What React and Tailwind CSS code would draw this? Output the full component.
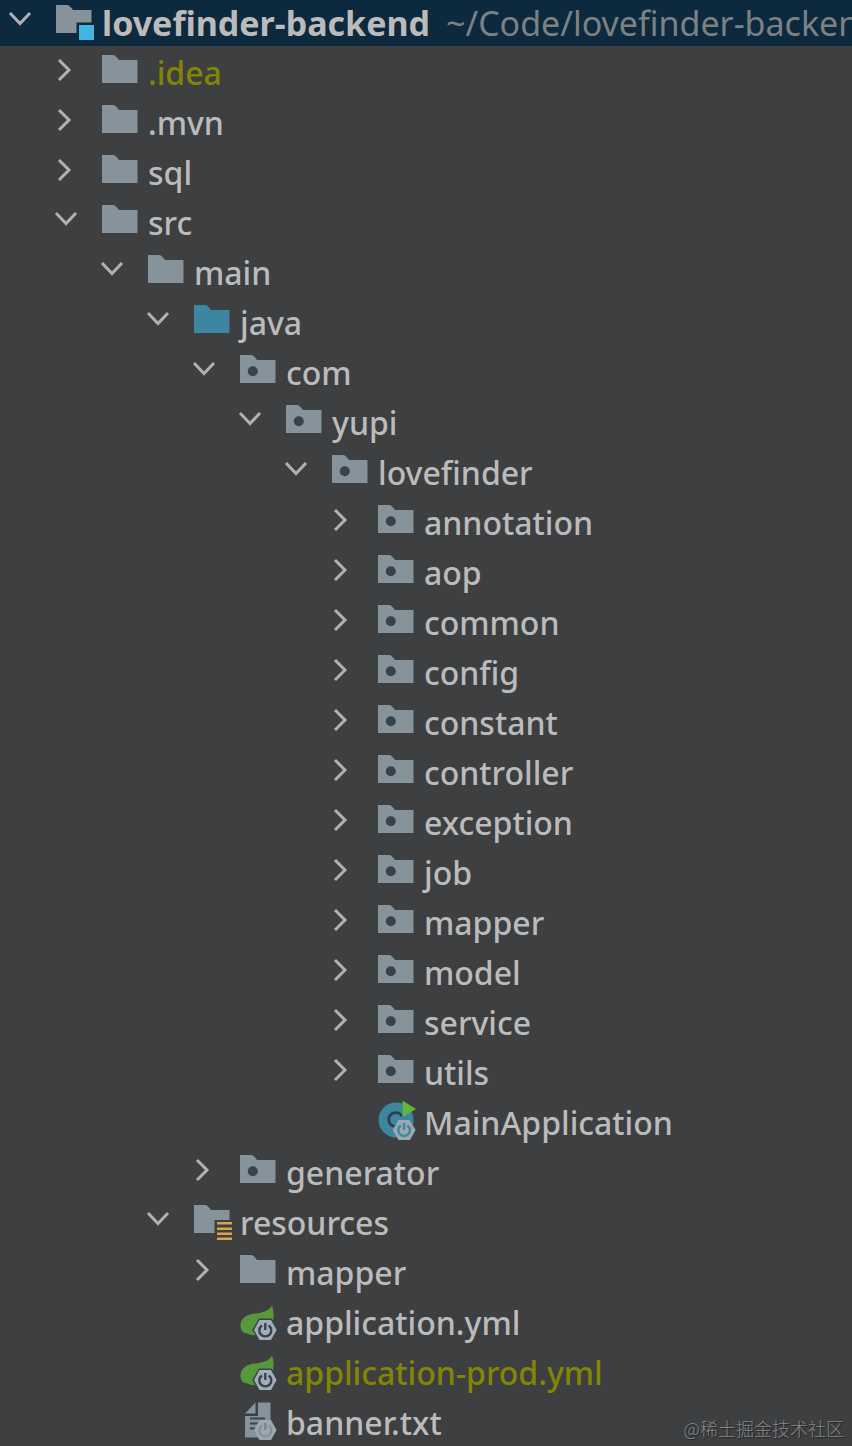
import React, { useState } from 'react';

const pkg = (name) => ({ name, icon: 'package', children: [] });

const project = {
  name: 'lovefinder-backend',
  path: '~/Code/lovefinder-backend',
  icon: 'module',
  open: true,
  children: [
    { name: '.idea', icon: 'folder', ignored: true, children: [] },
    { name: '.mvn', icon: 'folder', children: [] },
    { name: 'sql', icon: 'folder', children: [] },
    {
      name: 'src',
      icon: 'folder',
      open: true,
      children: [
        {
          name: 'main',
          icon: 'folder',
          open: true,
          children: [
            {
              name: 'java',
              icon: 'source',
              open: true,
              children: [
                {
                  name: 'com',
                  icon: 'package',
                  open: true,
                  children: [
                    {
                      name: 'yupi',
                      icon: 'package',
                      open: true,
                      children: [
                        {
                          name: 'lovefinder',
                          icon: 'package',
                          open: true,
                          children: [
                            pkg('annotation'),
                            pkg('aop'),
                            pkg('common'),
                            pkg('config'),
                            pkg('constant'),
                            pkg('controller'),
                            pkg('exception'),
                            pkg('job'),
                            pkg('mapper'),
                            pkg('model'),
                            pkg('service'),
                            pkg('utils'),
                            { name: 'MainApplication', icon: 'springClass' },
                          ],
                        },
                      ],
                    },
                  ],
                },
                pkg('generator'),
              ],
            },
            {
              name: 'resources',
              icon: 'resources',
              open: true,
              children: [
                { name: 'mapper', icon: 'folder', children: [] },
                { name: 'application.yml', icon: 'springConfig' },
                { name: 'application-prod.yml', icon: 'springConfig', ignored: true },
                { name: 'banner.txt', icon: 'springText' },
              ],
            },
          ],
        },
      ],
    },
  ],
};

const FOLDER = 'M2 5H13C15 5 17 7 19 10H37.5V33H2Z';

const BootBadge = ({ ink, fill }) => (
  <>
    <path d="M21 18.5H33.5L40 30L34 41H21L14.2 30Z" fill="#3d3f41" />
    <path d="M21.5 20H33L38.6 30L33 40H21.5L16 30Z" fill={fill} />
    <path d="M24 25.4A6 6 0 1 0 30.6 25.4" fill="none" stroke={ink} strokeWidth="2.4" />
    <path d="M27.3 23V30" stroke={ink} strokeWidth="2.4" />
  </>
);

const icons = {
  folder: <path d={FOLDER} fill="#87939a" />,
  source: <path d={FOLDER} fill="#3e86a0" />,
  package: (
    <>
      <path d={FOLDER} fill="#87939a" />
      <circle cx="14.8" cy="21.2" r="5" fill="#36434b" />
    </>
  ),
  module: (
    <>
      <path d="M2 5H13C15 5 17 7 19 10H37.5V22.5H22.5V33H2Z" fill="#87939a" />
      <path d="M25 25H40V40H25Z" fill="#40b6e0" />
    </>
  ),
  resources: (
    <>
      <path d="M2 5H13C15 5 17 7 19 10H37.5V20H22.5V33H2Z" fill="#87939a" />
      <path d="M25 23.3H40M25 28.8H40M25 33.8H40M25 38.7H40" stroke="#d6a54a" strokeWidth="2.6" />
    </>
  ),
  springClass: (
    <>
      <circle cx="20" cy="20" r="17.5" fill="#3e86a0" />
      <path d="M26 16.4A7 7 0 1 0 19.5 26.6" fill="none" stroke="#28404f" strokeWidth="2.8" />
      <path d="M26.5 0.5V17L40 9Z" fill="#5fb83d" />
      <path d="M22.5 20H33.5L39.6 30L34 40H22.5L16.6 30Z" fill="#9ba7b2" />
      <path d="M24.8 25.4A5.8 5.8 0 1 0 31.4 25.4" fill="none" stroke="#3e86a0" strokeWidth="2.4" />
      <path d="M28.1 23V30" stroke="#3e86a0" strokeWidth="2.4" />
    </>
  ),
  springConfig: (
    <>
      <path
        d="M34 5.5C31 10.5 26 12.5 18 13.5C9 14 3 18 2.5 25C2.3 29 4 31.5 6.5 33C10 33.5 14 33 17 33L35 20C36.3 15 35.5 10 34 5.5Z"
        fill="#57983c"
      />
      <path d="M9 33.5L20 31V35C16 35.4 12 35 9 33.5Z" fill="#57983c" />
      <BootBadge fill="#a1adb8" ink="#38424a" />
    </>
  ),
  springText: (
    <>
      <path d="M17.5 2.5V13.5H7Z" fill="#87939a" />
      <path d="M20 2.5H32.5V37.5H7V16H20Z" fill="#87939a" />
      <path d="M12 18.5H27M12 23.5H22M12 28.5H19" stroke="#3d464b" strokeWidth="2.2" />
      <path d="M21.5 20H33L38.6 30L33 40H21.5L16 30Z" fill="#9ba8b1" />
      <path d="M24 25.4A6 6 0 1 0 30.6 25.4" fill="none" stroke="#81909b" strokeWidth="2.2" />
      <path d="M27.3 23V30" stroke="#75838e" strokeWidth="2.2" />
    </>
  ),
};

const Chevron = ({ open }) => (
  <svg viewBox="0 0 40 40" className="size-10" fill="none" stroke="#afb1b3" strokeWidth="3">
    <path d={open ? 'M10 13L20 23.5L30 13' : 'M13 10L23 20L13 30'} />
  </svg>
);

const TreeNode = ({ node, root = false }) => {
  const [open, setOpen] = useState(Boolean(node.open));

  return (
    <li role="treeitem" aria-expanded={node.children ? open : undefined}>
      <div className={root ? 'flex h-[46px] bg-[#0d293e] text-[34px]' : 'flex h-[50px] pt-1'}>
        {node.children ? (
          <button
            type="button"
            aria-label={`Toggle ${node.name}`}
            onClick={() => setOpen(!open)}
            className="mr-3.5 size-10 shrink-0"
          >
            <Chevron open={open} />
          </button>
        ) : (
          <span className="mr-3.5 size-10 shrink-0" />
        )}
        <svg viewBox="0 0 40 40" className="mr-2 size-10 shrink-0" aria-hidden="true">
          {icons[node.icon]}
        </svg>
        <span className={node.ignored ? 'text-[#848504]' : root ? 'font-bold' : ''}>{node.name}</span>
        {node.path && <span className="ml-4 font-normal text-[#7c8184]">{node.path}</span>}
      </div>
      {open && node.children?.length > 0 && (
        <ul role="group" className="pl-[46px]">
          {node.children.map((child) => (
            <TreeNode key={child.name} node={child} />
          ))}
        </ul>
      )}
    </li>
  );
};

export default function App() {
  return (
    <div className="relative min-h-screen overflow-hidden bg-[#3d3f41] font-['Noto_Sans','Noto_Sans_CJK_SC',sans-serif] text-[32px] leading-[46px] font-medium whitespace-nowrap text-[#bbbbbb]">
      <ul role="tree" aria-label="Project">
        <TreeNode node={project} root />
      </ul>
      <span className="absolute right-2 bottom-1 font-['Noto_Sans_CJK_SC',sans-serif] text-[18px] leading-7 font-light text-[#85878a] [text-shadow:1px_1px_1px_#222]">
        @稀土掘金技术社区
      </span>
    </div>
  );
}
